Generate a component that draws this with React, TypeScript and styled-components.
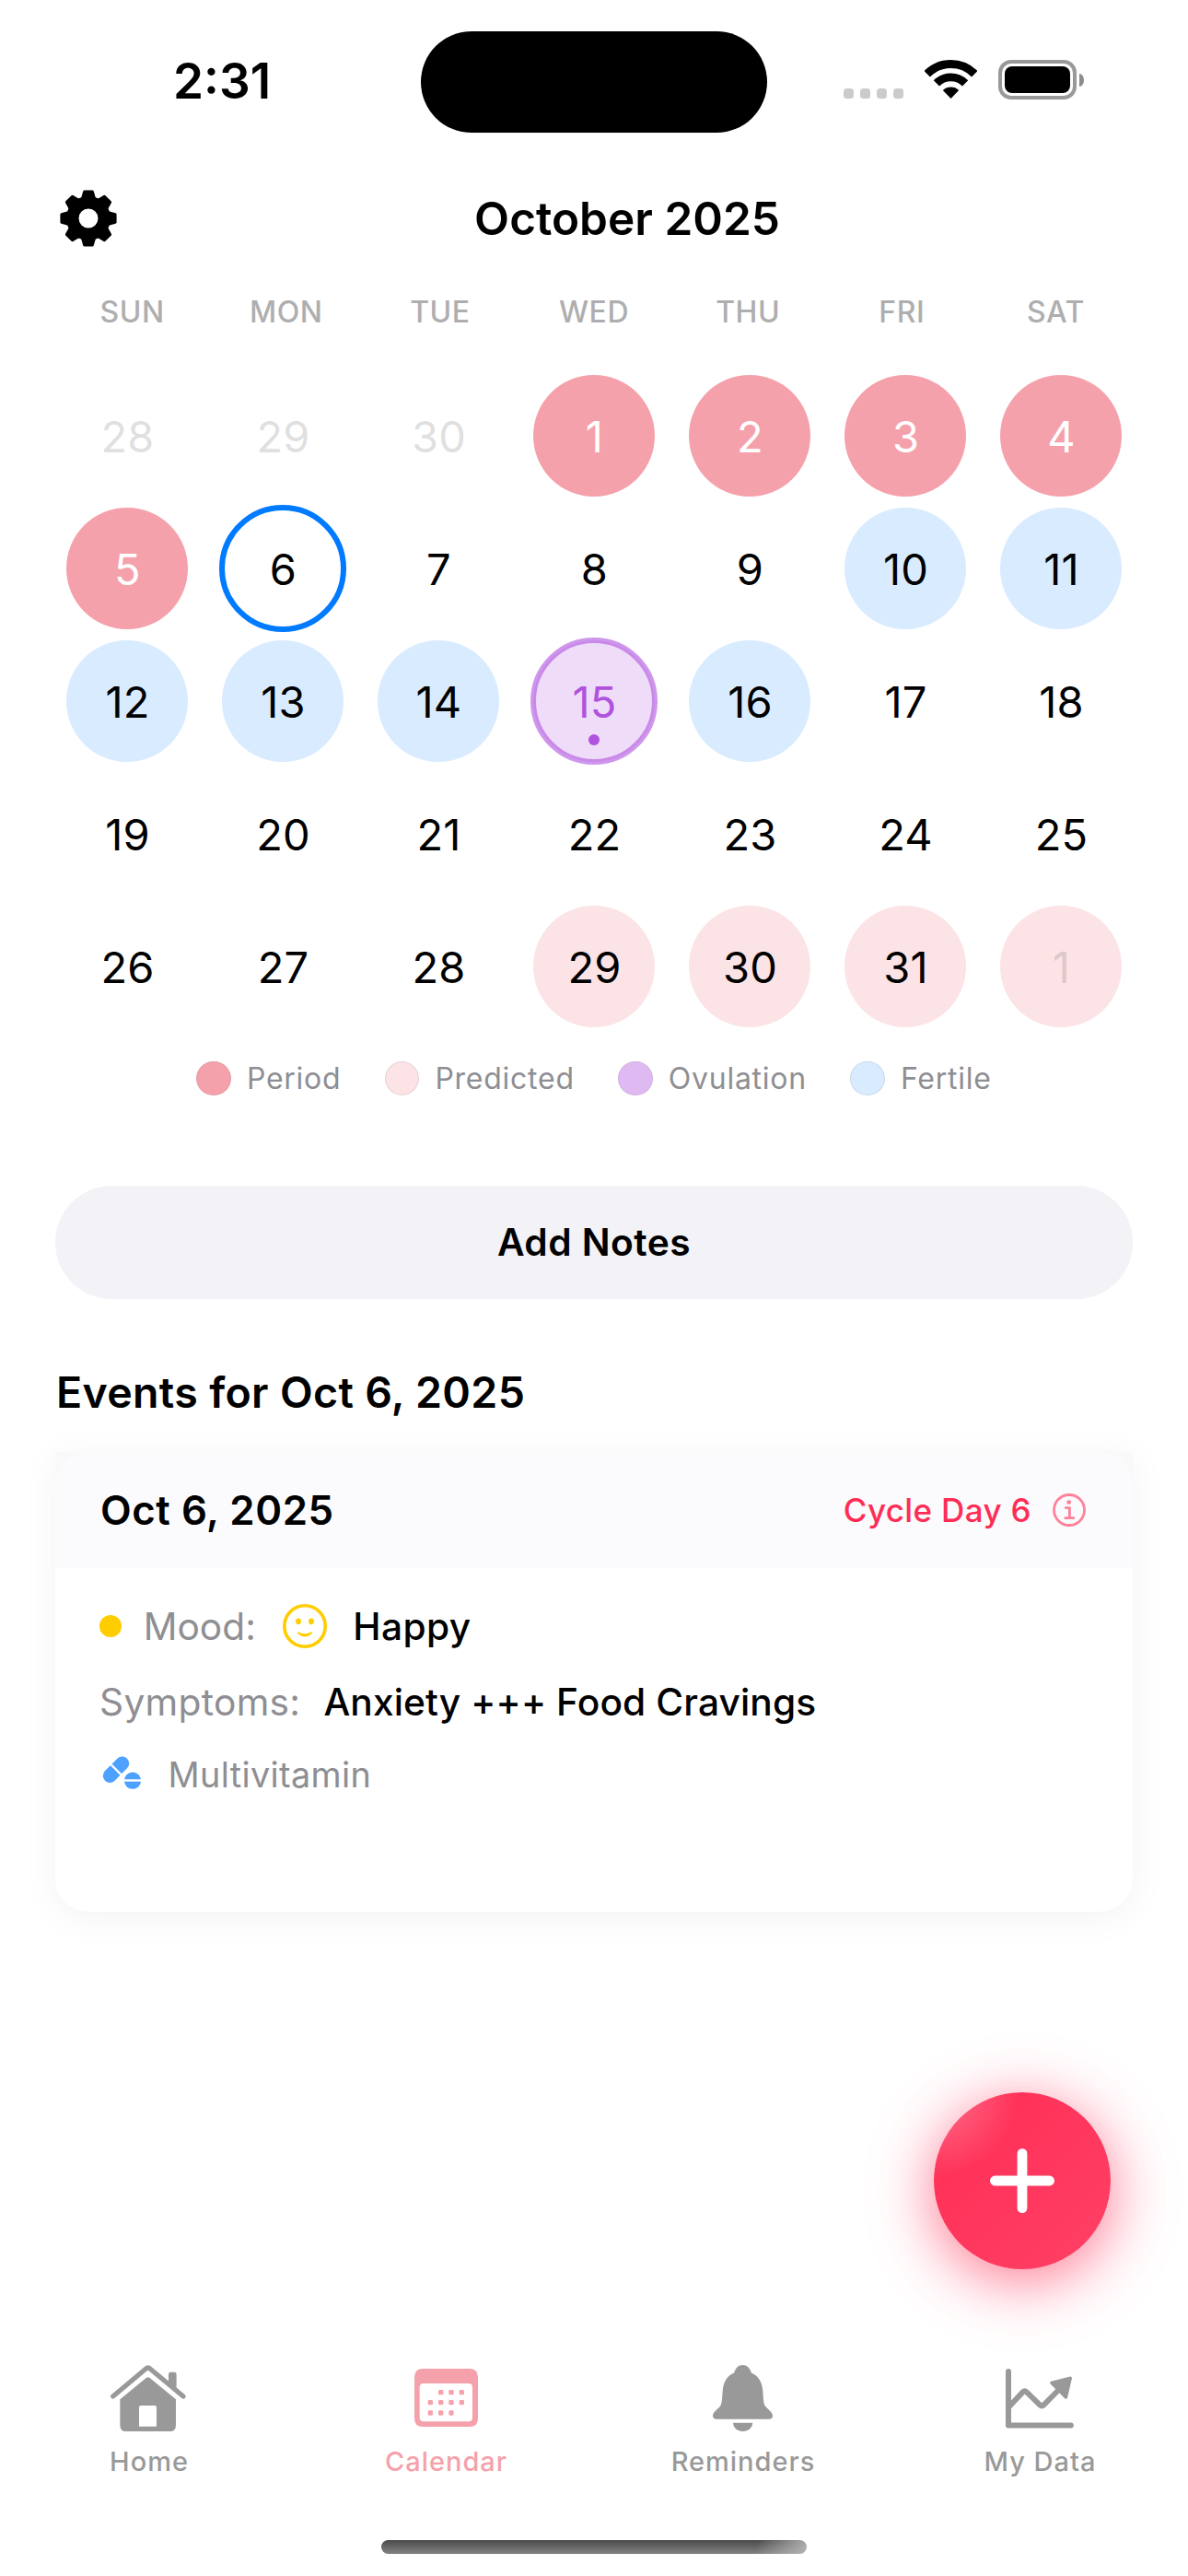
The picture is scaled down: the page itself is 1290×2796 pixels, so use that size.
import React from "react";
import styled, { createGlobalStyle, css } from "styled-components";

const GlobalStyle = createGlobalStyle`
  * { box-sizing: border-box; }
  body {
    margin: 0;
    background: #fff;
    font-family: Inter, "Liberation Sans", sans-serif;
    color: #000;
  }
`;

const Screen = styled.div`
  position: relative;
  display: flex;
  flex-direction: column;
  width: 1290px;
  height: 2796px;
  background: #fff;
  overflow: hidden;
  white-space: nowrap;
`;

/* Status bar */

const StatusBar = styled.div`
  display: grid;
  grid-template-columns: 457px 376px 457px;
  align-items: center;
  height: 175px;
`;

const Time = styled.div`
  padding-left: 188px;
  font-size: 53px;
  font-weight: 600;
`;

const Island = styled.div`
  height: 110px;
  margin-top: 2px;
  border-radius: 55px;
  background: #000;
`;

const StatusIcons = styled.div`
  display: flex;
  align-items: flex-end;
  height: 43px;
  margin-top: -2px;
  padding-left: 83px;
`;

const SignalDots = styled.div`
  display: flex;
  gap: 7px;
  margin-right: 23px;
  padding-bottom: 1px;
`;

const SignalDot = styled.span`
  width: 11px;
  height: 11px;
  border-radius: 3.5px;
  background: #cbcbcb;
`;

const WifiSvg = styled.svg`
  width: 57px;
  height: 42px;
  margin: 0 23px 1px 0;
`;

const BatteryShell = styled.div`
  width: 85px;
  height: 43px;
  padding: 3px;
  border: 4px solid #999;
  border-radius: 14px;
`;

const BatteryLevel = styled.div`
  height: 100%;
  border-radius: 8px;
  background: #000;
`;

const BatteryCap = styled.div`
  align-self: center;
  width: 5px;
  height: 14px;
  margin-left: 3px;
  border-radius: 0 5px 5px 0 / 0 7px 7px 0;
  background: #8c8c8c;
`;

/* Header */

const Header = styled.header`
  display: flex;
  align-items: center;
  height: 123px;
  padding: 0 60px;
`;

const IconButton = styled.button`
  display: flex;
  align-items: center;
  justify-content: center;
  width: 72px;
  height: 72px;
  padding: 0;
  border: 0;
  background: none;
`;

const MonthTitle = styled.h1`
  flex: 1;
  margin: 0;
  text-align: center;
  font-size: 49.5px;
  font-weight: 600;
`;

/* Calendar */

const Weekdays = styled.div`
  display: grid;
  grid-template-columns: repeat(7, 1fr);
  align-items: center;
  height: 81px;
  padding: 0 60px;
  text-align: center;
  font-size: 32px;
  font-weight: 500;
  letter-spacing: 0.5px;
  color: #aeaeb0;
`;

const DayGrid = styled.div`
  display: grid;
  grid-template-columns: repeat(7, 169px);
  grid-auto-rows: 144px;
  justify-content: center;
  place-items: center;
  margin-top: 22px;
`;

type Kind = "plain" | "period" | "predicted" | "fertile" | "ovulation" | "selected";

const kindStyles = {
  plain: css``,
  period: css`
    background: #f5a1ab;
    color: #fff;
  `,
  predicted: css`
    background: #fce3e6;
  `,
  fertile: css`
    background: #d9ebff;
  `,
  ovulation: css`
    background: #efdcf8;
    color: #af52de;
    &::after {
      content: "";
      position: absolute;
      inset: -3px;
      border: 6px solid rgba(175, 82, 222, 0.6);
      border-radius: 50%;
    }
  `,
  selected: css`
    &::after {
      content: "";
      position: absolute;
      inset: -3px;
      border: 6px solid #007aff;
      border-radius: 50%;
    }
  `,
};

const Day = styled.div<{ $kind: Kind; $outside?: boolean }>`
  position: relative;
  display: flex;
  align-items: center;
  justify-content: center;
  width: 132px;
  height: 132px;
  padding-left: 1px;
  border-radius: 50%;
  font-size: 47px;
  letter-spacing: 0.2px;
  ${(p) => kindStyles[p.$kind]}
  ${(p) => p.$outside && css`color: rgba(60, 60, 67, 0.18);`}
`;

const OvulationDot = styled.span`
  position: absolute;
  left: 60px;
  bottom: 18px;
  width: 12px;
  height: 12px;
  border-radius: 50%;
  background: #af52de;
`;

const Legend = styled.div`
  display: flex;
  align-items: center;
  justify-content: center;
  gap: 47.5px;
  height: 99px;
`;

const LegendItem = styled.div`
  display: flex;
  align-items: center;
  gap: 17px;
  font-size: 32px;
  letter-spacing: 0.75px;
  color: #8e8e93;
`;

const Swatch = styled.span<{ $color: string }>`
  width: 37.5px;
  height: 37.5px;
  border: 1.5px solid rgba(142, 142, 147, 0.2);
  border-radius: 50%;
  background: ${(p) => p.$color};
`;

/* Notes and events */

const NotesButton = styled.button`
  height: 123px;
  margin: 67px 60px 0;
  border: 0;
  border-radius: 62px;
  background: #f2f2f7;
  color: #000;
  font-family: inherit;
  font-size: 40.7px;
  font-weight: 600;
  letter-spacing: 0.45px;
`;

const SectionTitle = styled.h2`
  margin: 71px 60px 35px 61px;
  font-size: 46.5px;
  line-height: 60px;
  font-weight: 600;
  letter-spacing: 0.33px;
`;

const EventCard = styled.section`
  height: 499px;
  margin: 0 60px;
  border-radius: 0 0 36px 36px;
  background: #fff;
  box-shadow: 0 6px 42px rgba(0, 0, 0, 0.05);
`;

const CardHeaderBacking = styled.div`
  background: #f9f9f9;
`;

const CardHeader = styled.div`
  display: flex;
  align-items: center;
  height: 126px;
  padding: 0 51px 0 49px;
  border-radius: 36px 36px 0 0;
  background: #fbfbfd;
`;

const CardDate = styled.h3`
  flex: 1;
  margin: 0;
  font-size: 43.8px;
  font-weight: 600;
  letter-spacing: 0.56px;
`;

const CycleDay = styled.span`
  margin-right: 23px;
  color: #ff2d55;
  font-size: 35px;
  font-weight: 500;
  letter-spacing: 0.36px;
`;

const CardBody = styled.div`
  display: grid;
  grid-template-rows: 82px 82px 76px;
  padding: 22px 48px 0;
`;

const EventRow = styled.div<{ $gap: number }>`
  display: flex;
  align-items: center;
  gap: ${(p) => p.$gap}px;
`;

const MoodDot = styled.span`
  width: 24px;
  height: 24px;
  margin-right: -5px;
  border-radius: 50%;
  background: #ffcc00;
`;

const RowLabel = styled.span<{ $size?: number; $spacing?: number }>`
  color: #8e8e93;
  font-size: ${(p) => p.$size ?? 40.7}px;
  letter-spacing: ${(p) => p.$spacing ?? 0.3}px;
`;

const RowValue = styled.span<{ $spacing: number }>`
  font-size: 40.7px;
  font-weight: 500;
  letter-spacing: ${(p) => p.$spacing}px;
`;

/* Floating action button */

const AddButton = styled.button`
  position: absolute;
  right: 84px;
  bottom: 333px;
  display: flex;
  align-items: center;
  justify-content: center;
  width: 192px;
  height: 192px;
  padding: 0;
  border: 0;
  border-radius: 50%;
  background:
    radial-gradient(circle 92px at 0 0, rgba(255, 255, 255, 0.32), rgba(255, 255, 255, 0)),
    linear-gradient(135deg, #ff2d55, #ff4066);
  box-shadow:
    0 12px 60px rgba(255, 45, 85, 0.58),
    0 12px 100px rgba(255, 45, 85, 0.1);
`;

/* Tab bar */

const TabBar = styled.nav`
  display: grid;
  grid-template-columns: repeat(4, 1fr);
  margin-top: auto;
`;

const Tab = styled.div<{ $active?: boolean }>`
  display: flex;
  flex-direction: column;
  align-items: center;
  gap: 15px;
  color: ${(p) => (p.$active ? "#f5a1ab" : "#999")};
`;

const TabIcon = styled.div`
  display: flex;
  align-items: center;
  height: 72px;
`;

const TabLabel = styled.span`
  padding-left: 1.5px;
  font-size: 29px;
  line-height: 36px;
  font-weight: 500;
  letter-spacing: 1px;
`;

const HomeIndicator = styled.div`
  align-self: center;
  width: 462px;
  height: 15px;
  margin: 67px 0 24px;
  border-radius: 8px;
  background:
    linear-gradient(100deg, rgba(190, 190, 190, 0) 88%, rgba(190, 190, 190, 0.85) 100%),
    linear-gradient(#4a4a4a, #828282);
`;

const GearIcon = () => (
  <svg width="62" height="62" viewBox="-31 -31 62 62">
    <circle r="17.2" fill="none" stroke="#000" strokeWidth="13.4" />
    {[0, 45, 90, 135, 180, 225, 270, 315].map((a) => (
      <path
        key={a}
        d="M-6.7 -20 L-4.2 -28.9 H4.2 L6.7 -20 Z"
        transform={`rotate(${a})`}
        stroke="#000"
        strokeWidth="3.4"
        strokeLinejoin="round"
      />
    ))}
  </svg>
);

const WifiIcon = () => (
  <WifiSvg viewBox="0 0 57 42">
    <path d="M2.7 15.2 A36.5 36.5 0 0 1 54.3 15.2" fill="none" stroke="#000" strokeWidth="9" />
    <path d="M12.9 25.4 A22 22 0 0 1 44.1 25.4" fill="none" stroke="#000" strokeWidth="8.8" />
    <path d="M28.5 42 L19.8 33 A12.6 12.6 0 0 1 37.2 33 Z" />
  </WifiSvg>
);

const InfoIcon = () => (
  <svg width="36" height="36" viewBox="0 0 36 36" fill="none" stroke="#ff819a" strokeWidth="2.8">
    <circle cx="18" cy="18" r="16.5" />
    <path d="M14.2 15.6 H18.4 V26.4 M13.8 26.7 H22.8" strokeLinecap="round" strokeLinejoin="round" />
    <circle cx="17.7" cy="9.6" r="2.4" fill="#ff819a" stroke="none" />
  </svg>
);

const SmileIcon = () => (
  <svg width="48" height="48" viewBox="-24 -24 48 48">
    <circle r="22.2" fill="none" stroke="#ffcc00" strokeWidth="3.6" />
    <ellipse cx="-7" cy="-5.2" rx="2.9" ry="3.4" fill="#ffcc00" />
    <ellipse cx="7" cy="-5.2" rx="2.9" ry="3.4" fill="#ffcc00" />
    <path
      d="M-7.2 7.4 Q0 13.8 7.2 7.4 Q0 11.2 -7.2 7.4 Z"
      fill="#ffcc00"
      stroke="#ffcc00"
      strokeWidth="1.9"
      strokeLinejoin="round"
    />
  </svg>
);

const PillsIcon = () => (
  <svg width="48" height="48" viewBox="0 0 48 48">
    <path d="M24.7 12 L11.3 25.4" stroke="#4da2ff" strokeWidth="15" strokeLinecap="round" />
    <path d="M11.6 12.3 L24.4 25.1" stroke="#fff" strokeWidth="2.3" />
    <circle cx="36" cy="30.7" r="9.1" fill="#4da2ff" />
    <path d="M26 30.5 H46" stroke="#fff" strokeWidth="2.4" />
  </svg>
);

const PlusIcon = () => (
  <svg width="70" height="70" viewBox="0 0 70 70" stroke="#fff" strokeWidth="10.8" strokeLinecap="round">
    <path d="M35 5.4 V64.6 M5.4 35 H64.6" />
  </svg>
);

const HomeIcon = () => (
  <svg width="82" height="72.3" viewBox="120 80 246 217" fill="currentColor">
    <path
      d="M128 182 L238 90 Q242 87 246 90 L357 182"
      fill="none"
      stroke="currentColor"
      strokeWidth="15.5"
      strokeLinecap="round"
      strokeLinejoin="round"
    />
    <path d="M309 140 V110 Q309 103 316 103 H328 Q335 103 335 110 V160 Z" />
    <path
      fillRule="evenodd"
      d="M151 192 L236 122 Q242 117 248 122 L333 192 V275 Q333 297 311 297 H173 Q151 297 151 275 Z M219 212 Q213 212 213 218 V280 H270 V218 Q270 212 264 212 Z"
    />
  </svg>
);

const CalendarSvg = styled.svg`
  margin: 0 0 2px 1px;
`;

const CalendarIcon = () => (
  <CalendarSvg width="69" height="63" viewBox="1110 93 207 189" fill="currentColor">
    <path
      fillRule="evenodd"
      d="M1138 93 H1289 Q1317 93 1317 121 V254 Q1317 282 1289 282 H1138 Q1110 282 1110 254 V121 Q1110 93 1138 93 Z M1140 141 Q1127 141 1127 154 V252 Q1127 265 1140 265 H1286 Q1299 265 1299 252 V154 Q1299 141 1286 141 Z"
    />
    {[
      [1196, 170], [1230, 170], [1264, 170],
      [1162, 203], [1196, 203], [1230, 203], [1264, 203],
      [1162, 237], [1196, 237], [1230, 237],
    ].map(([x, y]) => (
      <rect key={`${x}-${y}`} x={x - 8} y={y - 8} width="16" height="16" rx="4" />
    ))}
  </CalendarSvg>
);

const BellIcon = () => (
  <svg width="65" height="72" viewBox="0 0 65 72" fill="currentColor">
    <path d="M23.2 8.6 C24.5 3 28 0 32.5 0 C37 0 40.5 3 41.8 8.6 C49 11.5 53.5 18 54.3 28 C55 36 54.7 40 56.5 44 C58.5 47.5 65 50.5 65 55 C65 57.5 63.5 58.7 61 58.7 H4 C1.5 58.7 0 57.5 0 55 C0 50.5 6.5 47.5 8.5 44 C10.3 40 10 36 10.7 28 C11.5 18 16 11.5 23.2 8.6 Z" />
    <path d="M22 62.7 H43.2 C43 68 38.5 72 32.6 72 S22.2 68 22 62.7 Z" />
  </svg>
);

const ChartIcon = () => (
  <svg
    width="74"
    height="65"
    viewBox="0 0 74 65"
    fill="none"
    stroke="currentColor"
    strokeWidth="6"
    strokeLinecap="round"
    strokeLinejoin="round"
  >
    <path d="M3 3 V61.5 H70.8" />
    <path d="M3.5 41.5 L18.6 25.4 Q20.7 23.4 22.8 25.4 L37.2 39.4 Q39.3 41.4 41.4 39.4 L58 22.5" />
    <path d="M70.3 10.2 L49.8 15.4 L65.4 31 Z" fill="currentColor" strokeWidth="3.4" />
  </svg>
);

const weekdays = ["SUN", "MON", "TUE", "WED", "THU", "FRI", "SAT"];

const dayKinds: Record<number, Kind> = {
  1: "period", 2: "period", 3: "period", 4: "period", 5: "period",
  6: "selected",
  10: "fertile", 11: "fertile", 12: "fertile", 13: "fertile", 14: "fertile",
  15: "ovulation",
  16: "fertile",
  29: "predicted", 30: "predicted", 31: "predicted",
};

const days: { n: number; kind: Kind; outside?: boolean }[] = [
  ...[28, 29, 30].map((n) => ({ n, kind: "plain" as Kind, outside: true })),
  ...Array.from({ length: 31 }, (_, i) => ({ n: i + 1, kind: dayKinds[i + 1] ?? ("plain" as Kind) })),
  { n: 1, kind: "predicted", outside: true },
];

const legend = [
  { label: "Period", color: "#f5a1ab" },
  { label: "Predicted", color: "#fce3e6" },
  { label: "Ovulation", color: "#dfbaf2" },
  { label: "Fertile", color: "#d9ebff" },
];

const tabs = [
  { label: "Home", icon: <HomeIcon /> },
  { label: "Calendar", icon: <CalendarIcon />, active: true },
  { label: "Reminders", icon: <BellIcon /> },
  { label: "My Data", icon: <ChartIcon /> },
];

export default function App() {
  return (
    <>
      <GlobalStyle />
      <Screen>
        <StatusBar>
          <Time>2:31</Time>
          <Island />
          <StatusIcons>
            <SignalDots>
              <SignalDot />
              <SignalDot />
              <SignalDot />
              <SignalDot />
            </SignalDots>
            <WifiIcon />
            <BatteryShell>
              <BatteryLevel />
            </BatteryShell>
            <BatteryCap />
          </StatusIcons>
        </StatusBar>

        <Header>
          <IconButton aria-label="Settings">
            <GearIcon />
          </IconButton>
          <MonthTitle>October 2025</MonthTitle>
        </Header>

        <Weekdays>
          {weekdays.map((d) => (
            <span key={d}>{d}</span>
          ))}
        </Weekdays>
        <DayGrid>
          {days.map((d, i) => (
            <Day key={i} $kind={d.kind} $outside={d.outside}>
              {d.n}
              {d.kind === "ovulation" && <OvulationDot />}
            </Day>
          ))}
        </DayGrid>
        <Legend>
          {legend.map((l) => (
            <LegendItem key={l.label}>
              <Swatch $color={l.color} />
              {l.label}
            </LegendItem>
          ))}
        </Legend>

        <NotesButton>Add Notes</NotesButton>

        <SectionTitle>Events for Oct 6, 2025</SectionTitle>
        <EventCard>
          <CardHeaderBacking>
            <CardHeader>
              <CardDate>Oct 6, 2025</CardDate>
              <CycleDay>Cycle Day 6</CycleDay>
              <InfoIcon />
            </CardHeader>
          </CardHeaderBacking>
          <CardBody>
            <EventRow $gap={28.7}>
              <MoodDot />
              <RowLabel $spacing={0}>Mood:</RowLabel>
              <SmileIcon />
              <RowValue $spacing={0.4}>Happy</RowValue>
            </EventRow>
            <EventRow $gap={25}>
              <RowLabel>Symptoms:</RowLabel>
              <RowValue $spacing={0.11}>Anxiety +++ Food Cravings</RowValue>
            </EventRow>
            <EventRow $gap={26.5}>
              <PillsIcon />
              <RowLabel $size={37.8} $spacing={0.35}>
                Multivitamin
              </RowLabel>
            </EventRow>
          </CardBody>
        </EventCard>

        <AddButton aria-label="Add">
          <PlusIcon />
        </AddButton>

        <TabBar>
          {tabs.map((t) => (
            <Tab key={t.label} $active={t.active}>
              <TabIcon>{t.icon}</TabIcon>
              <TabLabel>{t.label}</TabLabel>
            </Tab>
          ))}
        </TabBar>
        <HomeIndicator />
      </Screen>
    </>
  );
}
